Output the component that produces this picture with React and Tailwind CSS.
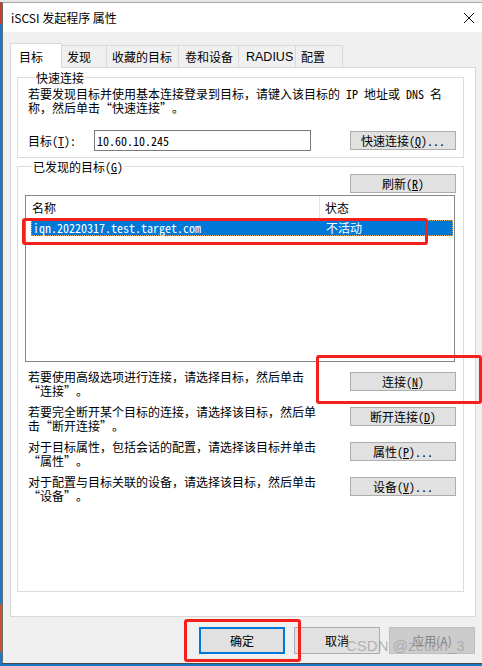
import React from 'react';

const SONG = "font-['Noto_Sans_Mono_CJK_SC','Noto_Sans_CJK_SC',monospace]";

function K({ children }) {
  return <span className="underline underline-offset-[1px]">{children}</span>;
}

function QL() {
  return <span className="inline-block w-[12px] text-right">“</span>;
}
function QR() {
  return <span className="inline-block w-[12px] text-left">”</span>;
}

function Btn({ children }) {
  return (
    <div className="flex h-[19px] w-[106px] shrink-0 items-center justify-center border border-[#adadad] bg-[#e1e1e1] text-[12px] leading-none text-black">
      {children}
    </div>
  );
}

function Row({ l1, l2, btn }) {
  return (
    <div className="flex items-start pl-[3px]">
      <div className="w-[300px] whitespace-nowrap text-[12px] leading-[14px] text-black">
        <div>{l1}</div>
        <div>{l2}</div>
      </div>
      <div className="ml-auto mt-[2px]">
        <Btn>{btn}</Btn>
      </div>
    </div>
  );
}

export default function App() {
  return (
    <div className="relative flex h-[666px] w-[482px] flex-col overflow-hidden bg-[#1b78c6]">
      <div className="h-[2px] w-full bg-[#e6e6e6]" />
      <div className="flex flex-1">
        {/* desktop strip */}
        <div className="flex w-[2px] flex-col">
          <div className="h-[22px] bg-[#c8412f]" />
          <div className="h-[580px] bg-[#1b78c6]" />
          <div className="h-[48px] bg-[#c9552c]" />
          <div className="flex-1 bg-[#1b78c6]" />
        </div>
        {/* window */}
        <div className="flex h-[662px] w-[480px] flex-col border-b border-l border-t border-b-[#4a4a4a] border-l-[#6a6a6a] border-t-[#a8a8a8] bg-[#f0f0f0] font-['Noto_Sans_CJK_SC',sans-serif]">
          {/* title bar */}
          <div className="flex h-[29px] items-center justify-between bg-white pl-[8px] pr-[6px]">
            <span className="text-[12px] text-black">iSCSI 发起程序 属性</span>
            <svg width="12" height="12" viewBox="0 0 12 12" className="mr-[1px]">
              <path d="M1 1 L11 11 M11 1 L1 11" stroke="#111" strokeWidth="1" fill="none" />
            </svg>
          </div>
          {/* body */}
          <div className="flex flex-1 flex-col px-[7px] pt-[10px]">
            {/* tabs */}
            <div className="relative z-10 flex h-[25px] items-end text-[12px] leading-none text-black">
              <div className="mb-[-1px] flex h-[25px] w-[52px] items-center border-l border-r border-t border-[#d9d9d9] bg-white pl-[8px] pt-[2px]">目标</div>
              <div className="flex h-[22px] w-[45px] items-center border-r border-t border-[#d9d9d9] pl-[5px] pt-[1px]">发现</div>
              <div className="flex h-[22px] w-[72px] items-center border-r border-t border-[#d9d9d9] pl-[5px] pt-[1px]">收藏的目标</div>
              <div className="flex h-[22px] w-[60px] items-center border-r border-t border-[#d9d9d9] pl-[6px] pt-[1px]">卷和设备</div>
              <div className="flex h-[22px] w-[57px] items-center border-r border-t border-[#d9d9d9] pl-[7px] pt-[1px] font-['Liberation_Sans',sans-serif] text-[12.5px]">RADIUS</div>
              <div className="flex h-[22px] w-[47px] items-center border-r border-t border-[#d9d9d9] pl-[5px] pt-[1px]">配置</div>
            </div>
            {/* panel */}
            <div className={`h-[550px] w-[466px] border border-[#d9d9d9] bg-white pl-[6px] pt-[3px] text-[12px] text-black ${SONG}`}>
              <fieldset className="h-[87px] w-[447px] border border-[#dcdcdc] pb-0 pl-[10px] pr-[7px] pt-[3px]">
                <legend className="ml-[7px] px-[1px] leading-[13px]">快速连接</legend>
                <div className="whitespace-nowrap leading-[14px]">
                  <div>若要发现目标并使用基本连接登录到目标，请键入该目标的 IP 地址或 DNS 名</div>
                  <div>称，然后单击<QL />快速连接<QR />。</div>
                </div>
                <div className="mt-[15px] flex items-center">
                  <span className="w-[66px] leading-none">目标(<K>T</K>):</span>
                  <div className="flex h-[21px] w-[217px] items-center border border-[#7a7a7a] bg-white pl-[2px] leading-none">10.60.10.245</div>
                  <div className="ml-auto">
                    <Btn>快速连接(<K>Q</K>)...</Btn>
                  </div>
                </div>
              </fieldset>
              <fieldset className="mt-[2px] h-[432px] w-[447px] border border-[#dcdcdc] px-[7px] pt-[1px]">
                <legend className="ml-[7px] px-[1px] leading-[13px]">已发现的目标(<K>G</K>)</legend>
                <div className="flex justify-end">
                  <Btn>刷新(<K>R</K>)</Btn>
                </div>
                <div className="mt-[2px] h-[167px] w-[430px] border border-[#828790] bg-white">
                  <div className="flex h-[23px] items-center">
                    <div className="flex h-full w-[294px] items-center border-r border-[#e5e5e5] pl-[6px]">名称</div>
                    <div className="pl-[5px]">状态</div>
                  </div>
                  <div className="ml-[5px] mr-[1px] mt-[1px] flex h-[16px] items-center border border-dotted border-[#e2a75a] bg-[#0078d7] text-white">
                    <div className="w-[289px] pl-[1px] leading-none">iqn.20220317.test.target.com</div>
                    <div className="pl-[5px] leading-none">不活动</div>
                  </div>
                </div>
                <div className="mt-[8px] flex flex-col gap-[7px]">
                  <Row
                    l1="若要使用高级选项进行连接，请选择目标，然后单击"
                    l2={<><QL />连接<QR />。</>}
                    btn={<>连接(<K>N</K>)</>}
                  />
                  <Row
                    l1="若要完全断开某个目标的连接，请选择该目标，然后单"
                    l2={<>击<QL />断开连接<QR />。</>}
                    btn={<>断开连接(<K>D</K>)</>}
                  />
                  <Row
                    l1="对于目标属性，包括会话的配置，请选择该目标并单击"
                    l2={<><QL />属性<QR />。</>}
                    btn={<>属性(<K>P</K>)...</>}
                  />
                  <Row
                    l1="对于配置与目标关联的设备，请选择该目标，然后单击"
                    l2={<><QL />设备<QR />。</>}
                    btn={<>设备(<K>V</K>)...</>}
                  />
                </div>
              </fieldset>
            </div>
            {/* bottom buttons */}
            <div className="mt-[10px] flex justify-end gap-[9px] text-[12px]">
              <div className="flex h-[27px] w-[86px] items-center justify-center border-2 border-[#0078d7] bg-[#e1e1e1] text-black">确定</div>
              <div className="flex h-[27px] w-[86px] items-center justify-center border border-[#adadad] bg-[#e1e1e1] text-black">取消</div>
              <div className="flex h-[27px] w-[86px] items-center justify-center border border-[#bfbfbf] bg-[#cccccc] text-[#838383]">应用(A)</div>
            </div>
          </div>
        </div>
      </div>

      {/* annotations (overlays) */}
      <div className="pointer-events-none absolute left-[22px] top-[218px] h-[27px] w-[406px] rounded-[3px] border-[3px] border-[#f5201c]" />
      <div className="pointer-events-none absolute left-[316px] top-[355px] h-[49px] w-[166px] rounded-[3px] border-[3px] border-[#f5201c]" />
      <div className="pointer-events-none absolute left-[184px] top-[619px] h-[43px] w-[117px] rounded-[3px] border-[3px] border-[#f5201c]" />
      <div className="pointer-events-none absolute left-[346px] top-[638px] font-['Liberation_Sans',sans-serif] text-[15px] leading-none text-[#9a9a9a]/70">CSDN @zetion_3</div>
    </div>
  );
}
